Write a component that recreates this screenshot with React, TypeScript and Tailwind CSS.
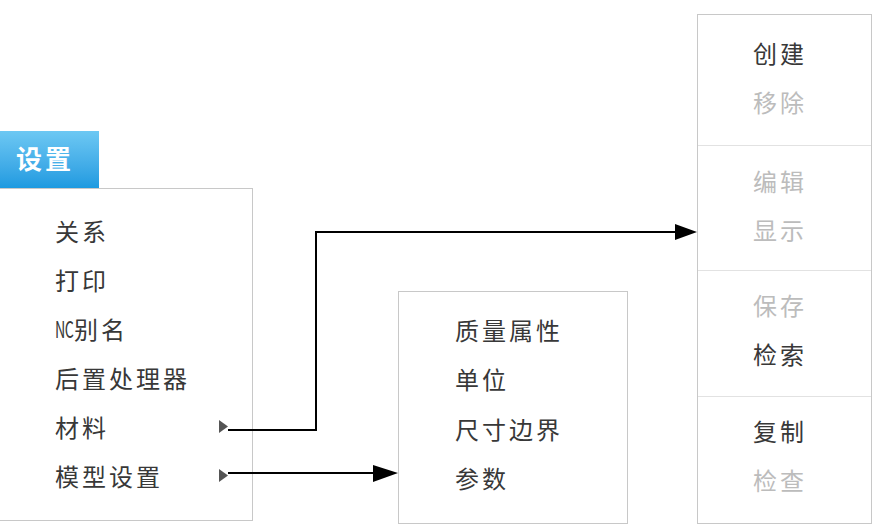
import React from "react";

type Item = { label: string; disabled?: boolean; sub?: boolean; latin?: string };

const mainItems: Item[] = [
  { label: "关系" },
  { label: "打印" },
  { label: "别名", latin: "NC" },
  { label: "后置处理器" },
  { label: "材料", sub: true },
  { label: "模型设置", sub: true },
];

const modelItems: Item[] = [
  { label: "质量属性" },
  { label: "单位" },
  { label: "尺寸边界" },
  { label: "参数" },
];

const materialGroups: Item[][] = [
  [{ label: "创建" }, { label: "移除", disabled: true }],
  [
    { label: "编辑", disabled: true },
    { label: "显示", disabled: true },
  ],
  [{ label: "保存", disabled: true }, { label: "检索" }],
  [{ label: "复制" }, { label: "检查", disabled: true }],
];

const font = { fontFamily: '"Noto Sans CJK SC", "Liberation Sans", sans-serif' };

function SubArrow() {
  return (
    <svg className="ml-auto mr-[24px]" width="9" height="13" viewBox="0 0 9 13">
      <path d="M0 0 L9 6.5 L0 13 Z" fill="#555" />
    </svg>
  );
}

function Row({ item, h }: { item: Item; h: string }) {
  return (
    <div
      className={`${h} flex items-center text-[24px] tracking-[3px] leading-none ${
        item.disabled ? "text-[#bcbcbc]" : "text-[#383838]"
      }`}
    >
      {item.latin && (
        <span className="inline-block w-[19px] text-[23px] tracking-[-1px] scale-x-[0.62] origin-left">
          {item.latin}
        </span>
      )}
      <span>{item.label}</span>
      {item.sub && <SubArrow />}
    </div>
  );
}

function Connectors() {
  return (
    <svg
      className="absolute inset-0 pointer-events-none"
      width="888"
      height="525"
      viewBox="0 0 888 525"
    >
      <path d="M228 430 H316 V232 H676" fill="none" stroke="#000" strokeWidth="2" />
      <path d="M675 224 L697 232 L675 240 Z" fill="#000" />
      <path d="M228 473 H374" fill="none" stroke="#000" strokeWidth="2" />
      <path d="M373 465 L398 473 L373 482 Z" fill="#000" />
    </svg>
  );
}

export default function App() {
  return (
    <div className="relative w-[888px] h-[525px] bg-white overflow-hidden" style={font}>
      <div className="flex items-start">
        {/* main settings menu */}
        <div className="w-[253px] mt-[131px]">
          <div className="w-[99px] h-[57px] bg-gradient-to-b from-[#6cc8f3] to-[#1c9ae0] flex items-center pl-4 pb-[3px]">
            <span className="text-white text-[26px] font-bold tracking-[3px] leading-none">设置</span>
          </div>
          <div className="h-[333px] border-t border-r border-b border-[#c8c8c8] pt-[17px] pl-[55px]">
            {mainItems.map((it) => (
              <Row key={it.label} item={it} h="h-[49px]" />
            ))}
          </div>
        </div>

        {/* model settings submenu */}
        <div className="ml-[145px] mt-[291px] w-[230px] h-[233px] border border-[#c8c8c8] pt-[13px] pl-[56px]">
          {modelItems.map((it) => (
            <Row key={it.label} item={it} h="h-[49.5px]" />
          ))}
        </div>

        {/* material submenu */}
        <div className="ml-[69px] mt-[14px] w-[175px] h-[510px] border border-[#c8c8c8] flex flex-col">
          {materialGroups.map((g, i) => (
            <div
              key={i}
              className={`flex flex-col justify-center pl-[55px] ${
                i === 0 ? "h-[130px] pb-[5px]" : "border-t border-[#e2e2e2]"
              } ${i === 1 ? "h-[125px] pb-[6px]" : ""} ${i === 2 ? "h-[126px] pb-[9px]" : ""} ${
                i === 3 ? "flex-1 pb-[10px]" : ""
              }`}
            >
              {g.map((it) => (
                <Row key={it.label} item={it} h="h-[49px]" />
              ))}
            </div>
          ))}
        </div>
      </div>
      <Connectors />
    </div>
  );
}
